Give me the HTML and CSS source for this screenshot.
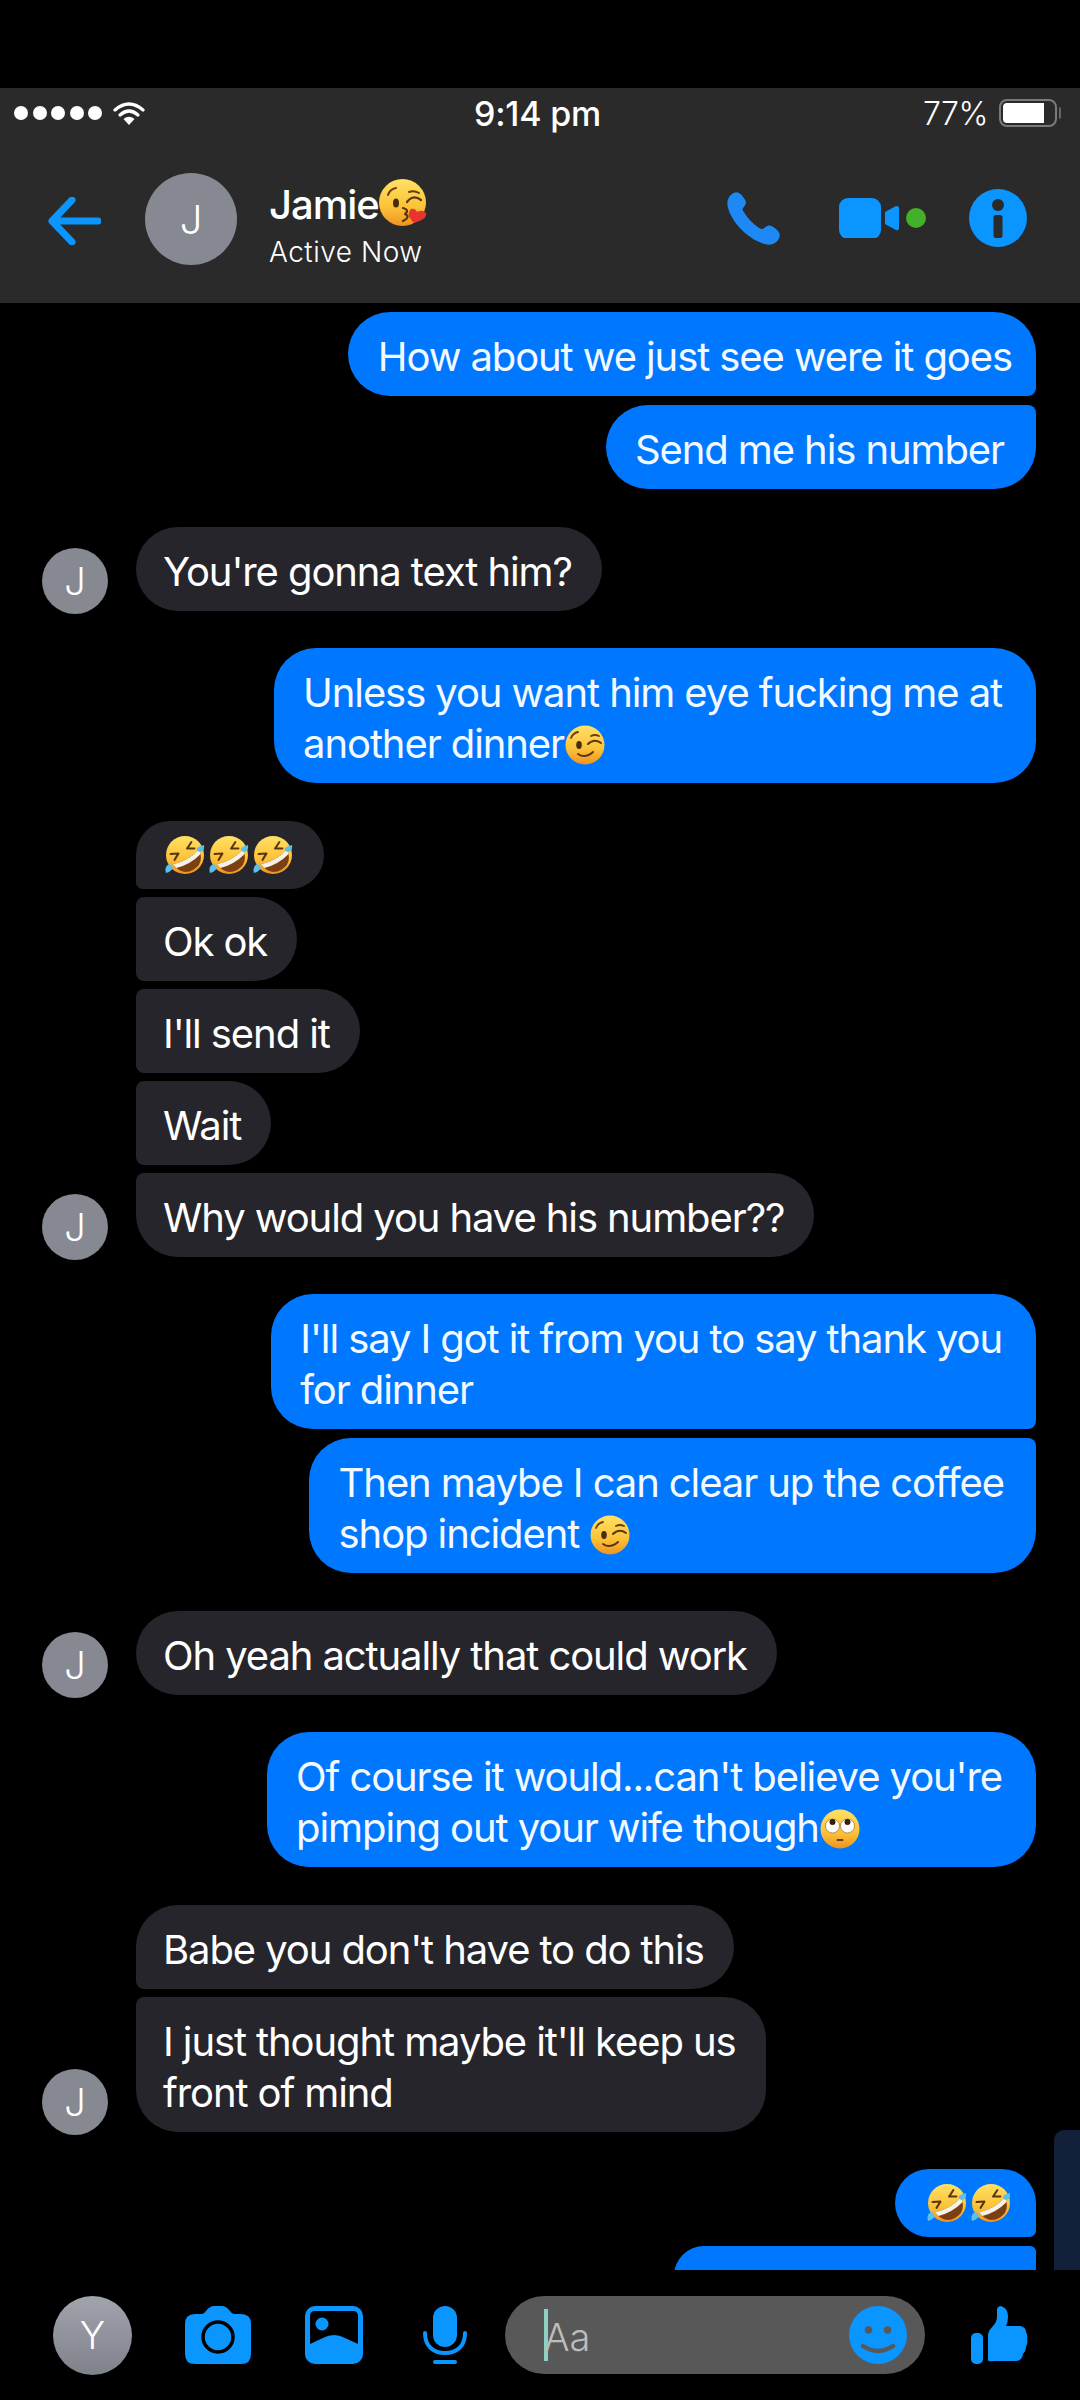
FILE: index.html
```html
<!DOCTYPE html>
<html lang="en">

<head>
    <meta charset="UTF-8">
    <title>Jamie</title>
    <link rel="stylesheet" href="styles.css">
</head>

<body>
    <svg class="sprites" xmlns="http://www.w3.org/2000/svg">
        <defs>
            <linearGradient id="skin" x1="0" y1="0" x2="0" y2="1">
                <stop offset="0" stop-color="#ffe164" />
                <stop offset="0.6" stop-color="#fcc238" />
                <stop offset="1" stop-color="#ee9322" />
            </linearGradient>
            <symbol id="e-rofl" viewBox="0 0 40 40">
                <circle cx="20" cy="20" r="19" fill="url(#skin)" />
                <g transform="rotate(-30 20 20)">
                    <path d="M8 12 L15 15.5 L8.5 19" fill="none" stroke="#5b3410" stroke-width="2" stroke-linecap="round" stroke-linejoin="round" />
                    <path d="M32 12 L25 15.5 L31.5 19" fill="none" stroke="#5b3410" stroke-width="2" stroke-linecap="round" stroke-linejoin="round" />
                    <path d="M5 22 Q20 27 35 22 Q33 37 20 37 Q7 37 5 22 Z" fill="#7c3f12" />
                    <path d="M5 22 Q20 27 35 22 L34 27 Q20 31 6 27 Z" fill="#f4f1ea" />
                </g>
                <path d="M39 10 Q40 16 35 17 Q31 16 32 13 Q35 11 39 10 Z" fill="#5cc0ea" />
                <path d="M1 38 Q-1 32 4 29 Q8 30 7.500 34 Q5 37 1 38 Z" fill="#5cc0ea" />
            </symbol>
            <symbol id="e-wink" viewBox="0 0 40 40">
                <circle cx="20" cy="20" r="19.500" fill="url(#skin)" />
                <path d="M6 13 Q8 8 13 7" fill="none" stroke="#6a3d12" stroke-width="1.800" stroke-linecap="round" />
                <ellipse cx="14" cy="20" rx="2.800" ry="4" fill="#4a2c10" />
                <path d="M23 19 Q29 13 36 18" fill="none" stroke="#5b3410" stroke-width="2" stroke-linecap="round" />
                <path d="M26 11 Q30 9 34 11" fill="none" stroke="#6a3d12" stroke-width="1.800" stroke-linecap="round" />
                <path d="M13 29 Q20 34 28 27" fill="none" stroke="#5b3410" stroke-width="2" stroke-linecap="round" />
            </symbol>
            <symbol id="e-roll" viewBox="0 0 40 40">
                <circle cx="20" cy="20" r="19.500" fill="url(#skin)" />
                <circle cx="12.500" cy="17" r="7" fill="#fff" stroke="#8a5a1c" stroke-width="0.600" />
                <circle cx="27.500" cy="17" r="7" fill="#fff" stroke="#8a5a1c" stroke-width="0.600" />
                <circle cx="12.500" cy="13" r="3" fill="#33210d" />
                <circle cx="27.500" cy="13" r="3" fill="#33210d" />
                <rect x="16.500" y="30" width="7" height="2" rx="1" fill="#6a3d12" />
            </symbol>
            <symbol id="e-kiss" viewBox="0 0 48 48">
                <circle cx="23.500" cy="23.500" r="23.500" fill="url(#skin)" />
                <path d="M9 16 Q11 10 17 9" fill="none" stroke="#6a3d12" stroke-width="2" stroke-linecap="round" />
                <ellipse cx="17" cy="24" rx="3" ry="4.500" fill="#4a2c10" />
                <path d="M28 23 Q34 15 42 21" fill="none" stroke="#5b3410" stroke-width="2.200" stroke-linecap="round" />
                <path d="M30 13 Q35 11 40 14" fill="none" stroke="#6a3d12" stroke-width="2" stroke-linecap="round" />
                <path d="M24 29 Q31 31 26 35 Q32 38 24 42" fill="none" stroke="#5b3410" stroke-width="2.200" stroke-linecap="round" stroke-linejoin="round" />
                <path d="M35 44 Q26 36 32 30 Q36 29 38 33 Q43 30 47 34 Q49 40 35 44 Z" fill="#e8342f" />
            </symbol>
        </defs>
    </svg>

    <div class="app">
        <header class="topbar">
            <div class="status">
                <div class="status-left">
                    <span class="dot"></span><span class="dot"></span><span class="dot"></span><span class="dot"></span><span class="dot"></span>
                    <svg class="wifi" viewBox="0 0 32 24">
                        <path d="M2 9 Q16 -3 30 9" fill="none" stroke="#fff" stroke-width="3.200" stroke-linecap="round" />
                        <path d="M7 14 Q16 6 25 14" fill="none" stroke="#fff" stroke-width="3.200" stroke-linecap="round" />
                        <path d="M10.500 18 Q16 13.500 21.500 18 L16 24 Z" fill="#fff" />
                    </svg>
                </div>
                <div class="status-time">9:14 pm</div>
                <div class="status-right">
                    <span class="percent">77%</span>
                    <span class="battery"><span class="battery-fill"></span></span>
                    <span class="battery-tip"></span>
                </div>
            </div>
            <div class="nav">
                <svg class="icon-back" viewBox="0 0 53 48">
                    <path d="M50 24 H4 M24 3 L4 24 L24 45" fill="none" stroke="#0a95ff" stroke-width="7" stroke-linecap="round" stroke-linejoin="round" />
                </svg>
                <div class="avatar avatar-nav">J</div>
                <div class="contact">
                    <div class="contact-name">Jamie<svg class="emoji-kiss"><use href="#e-kiss" /></svg></div>
                    <div class="contact-status">Active Now</div>
                </div>
                <div class="nav-actions">
                    <svg class="icon-phone" viewBox="0 0 160 160">
                        <path d="M20 3 C30 -2 40 3 48 14 C60 28 60 34 50 46 C46 50 46 54 52 62 C62 80 78 96 96 108 C106 114 110 112 116 106 C126 98 132 100 146 110 C160 120 162 130 156 142 C148 156 134 162 116 158 C70 146 14 96 2 44 C-1 26 4 12 20 3 Z" fill="#1e88f5" />
                    </svg>
                    <svg class="icon-video" viewBox="0 0 87 40">
                        <rect x="0" y="0" width="42" height="41" rx="9" fill="#0a95ff" />
                        <path d="M46 14 L57 8 Q60 8 60 10 V30 Q60 33 57 32 L46 26 Q46 20 46 14 Z" fill="#0a95ff" />
                        <circle cx="77" cy="20" r="10" fill="#43b02a" />
                    </svg>
                    <svg class="icon-info" viewBox="0 0 58 58">
                        <circle cx="29" cy="29" r="29" fill="#0a95ff" />
                        <circle cx="29" cy="16" r="6" fill="#2a2a2a" />
                        <rect x="24.500" y="26" width="9" height="23" rx="2.500" fill="#2a2a2a" />
                    </svg>
                </div>
            </div>
        </header>

        <main class="chat">
            <div class="group out">
                <div class="bubble first p-a">How about we just see were it goes</div>
                <div class="bubble last p-b">Send me his number</div>
            </div>

            <div class="group in">
                <div class="avatar">J</div>
                <div class="stack">
                    <div class="bubble single">You're gonna text him?</div>
                </div>
            </div>

            <div class="group out">
                <div class="bubble single p-c">Unless you want him eye fucking me at<br>another dinner<svg class="emoji"><use href="#e-wink" /></svg></div>
            </div>

            <div class="group in">
                <div class="avatar">J</div>
                <div class="stack">
                    <div class="bubble first emoji-row"><svg class="emoji"><use href="#e-rofl" /></svg><svg class="emoji"><use href="#e-rofl" /></svg><svg class="emoji"><use href="#e-rofl" /></svg></div>
                    <div class="bubble middle">Ok ok</div>
                    <div class="bubble middle">I'll send it</div>
                    <div class="bubble middle">Wait</div>
                    <div class="bubble last">Why would you have his number??</div>
                </div>
            </div>

            <div class="group out">
                <div class="bubble first p-c">I'll say I got it from you to say thank you<br>for dinner</div>
                <div class="bubble last p-d">Then maybe I can clear up the coffee<br>shop incident <svg class="emoji"><use href="#e-wink" /></svg></div>
            </div>

            <div class="group in">
                <div class="avatar">J</div>
                <div class="stack">
                    <div class="bubble single">Oh yeah actually that could work</div>
                </div>
            </div>

            <div class="group out">
                <div class="bubble single p-c">Of course it would...can't believe you're<br>pimping out your wife though<svg class="emoji"><use href="#e-roll" /></svg></div>
            </div>

            <div class="group in">
                <div class="avatar">J</div>
                <div class="stack">
                    <div class="bubble first">Babe you don't have to do this</div>
                    <div class="bubble last">I just thought maybe it'll keep us<br>front of mind</div>
                </div>
            </div>

            <div class="group out">
                <div class="bubble first emoji-row"><svg class="emoji"><use href="#e-rofl" /></svg><svg class="emoji"><use href="#e-rofl" /></svg></div>
                <div class="bubble last cut"></div>
            </div>

            <div class="scroll-thumb"></div>
        </main>

        <footer class="composer">
            <div class="avatar avatar-me">Y</div>
            <svg class="icon-camera" viewBox="0 0 66 58">
                <path d="M10 8 H17 Q19 8 21 5 Q25 0 29 0 H37 Q41 0 45 5 Q47 8 49 8 H56 Q66 8 66 18 V48 Q66 58 56 58 H10 Q0 58 0 48 V18 Q0 8 10 8 Z" fill="#0a95ff" />
                <circle cx="33" cy="31" r="15" fill="none" stroke="#000" stroke-width="3.500" />
            </svg>
            <svg class="icon-image" viewBox="0 0 58 58">
                <rect x="0" y="0" width="58" height="58" rx="10" fill="#0a95ff" />
                <path d="M5 38 V10 Q5 5 10 5 H48 Q53 5 53 10 V38 L40 32 Q29 26 18 32 Z" fill="#000" />
                <circle cx="17" cy="18" r="6.500" fill="#0a95ff" />
            </svg>
            <svg class="icon-mic" viewBox="0 0 44 58">
                <rect x="10" y="0" width="24" height="41" rx="12" fill="#0a95ff" />
                <path d="M2 27 C2 41 11 47 22 47 C33 47 42 41 42 27" fill="none" stroke="#0a95ff" stroke-width="4" stroke-linecap="round" />
                <rect x="10" y="54" width="24" height="4" rx="2" fill="#0a95ff" />
            </svg>
            <div class="input">
                <span class="caret"></span>
                <span class="placeholder">Aa</span>
                <svg class="icon-smile" viewBox="0 0 58 58">
                    <circle cx="29" cy="29" r="29" fill="#0a95ff" />
                    <circle cx="19.500" cy="24" r="3.800" fill="#585858" />
                    <circle cx="38.500" cy="24" r="3.800" fill="#585858" />
                    <path d="M14 40 Q29 50 44 40" fill="none" stroke="#585858" stroke-width="4.500" stroke-linecap="round" />
                </svg>
            </div>
            <svg class="icon-thumb" viewBox="0 0 58 58">
                <rect x="1" y="27" width="12" height="31" rx="5" fill="#0a95ff" />
                <path d="M18 54 V30 Q18 25 23 20 Q27 16 27 10 V3 Q28 0 31 0 Q38 2 38 11 Q38 16 36 20 H50 Q56 21 56 26 Q58 29 57 33 Q58 37 56 41 Q56 45 53 48 Q52 55 46 55 H24 Q18 56 18 54 Z" fill="#0a95ff" />
            </svg>
        </footer>
    </div>
</body>

</html>
```

FILE: styles.css
```css
body,
html {
    margin: 0;
    padding: 0;
    background: #000;
    color: #fff;
    font-family: 'Inter', 'Liberation Sans', sans-serif;
}

.sprites {
    display: block;
    width: 0;
    height: 0;
}

.app {
    width: 1080px;
    height: 2400px;
    padding-top: 88px;
    box-sizing: border-box;
    display: flex;
    flex-direction: column;
    overflow: hidden;
}

/* top bar */

.topbar {
    height: 215px;
    flex: none;
    background: #2a2a2a;
}

.status {
    height: 50px;
    padding: 0 19px 0 14px;
    display: flex;
    align-items: center;
    justify-content: space-between;
    position: relative;
}

.status-left {
    display: flex;
    align-items: center;
    gap: 4.500px;
    width: 300px;
}

.dot {
    width: 14px;
    height: 14px;
    border-radius: 50%;
    background: #fff;
}

.wifi {
    width: 32px;
    height: 24px;
    margin-left: 6px;
}

.status-time {
    font-size: 34px;
    font-weight: 500;
    letter-spacing: -0.2px;
}

.status-right {
    width: 300px;
    display: flex;
    align-items: center;
    justify-content: flex-end;
}

.percent {
    font-size: 32px;
    font-weight: 300;
    letter-spacing: -0.5px;
    margin-right: 11px;
}

.battery {
    width: 58px;
    height: 28px;
    box-sizing: border-box;
    border: 2px solid #7a7a7a;
    border-radius: 8px;
    padding: 2px;
    display: flex;
}

.battery-fill {
    width: 41px;
    background: #fff;
    border-radius: 4px 0 0 4px;
}

.battery-tip {
    width: 2px;
    height: 12px;
    margin-left: 2px;
    background: #666;
    border-radius: 0 2px 2px 0;
}

.nav {
    height: 165px;
    display: flex;
    align-items: center;
    padding: 0 53px 0 48px;
}

.icon-back {
    width: 53px;
    height: 48px;
    margin-right: 44px;
}

.avatar {
    width: 66px;
    height: 66px;
    flex: none;
    border-radius: 50%;
    background: #868992;
    display: flex;
    align-items: center;
    justify-content: center;
    font-size: 38px;
    font-weight: 300;
    color: #fff;
}

.avatar-nav {
    width: 92px;
    height: 92px;
    font-size: 40px;
    margin-top: -3px;
    margin-right: 32px;
}

.contact {
    flex: 1;
    margin-top: 7px;
}

.contact-name {
    font-size: 40px;
    font-weight: 500;
    letter-spacing: -1px;
    height: 54px;
    line-height: 54px;
    display: flex;
    align-items: center;
}

.emoji-kiss {
    width: 48px;
    height: 48px;
    margin-top: -4px;
}

.contact-status {
    font-size: 28px;
    font-weight: 300;
    letter-spacing: 0.5px;
    height: 38px;
    line-height: 40px;
}

.nav-actions {
    display: flex;
    align-items: center;
    margin-top: -5px;
}

.icon-phone {
    width: 53px;
    height: 53px;
    margin-right: 59px;
}

.icon-video {
    width: 87px;
    height: 40px;
    margin-right: 43px;
}

.icon-info {
    width: 58px;
    height: 58px;
}

/* messages */

.chat {
    flex: 1;
    position: relative;
    overflow: hidden;
    padding-top: 9px;
    display: flex;
    flex-direction: column;
    gap: 37.500px;
}

.group {
    display: flex;
    flex: none;
}

.group.out {
    flex-direction: column;
    align-items: flex-end;
    gap: 9px;
    padding-right: 44px;
}

.group.in {
    align-items: flex-end;
    padding-left: 42px;
    gap: 28px;
}

.group.in .avatar {
    margin-bottom: -3px;
}

.stack {
    display: flex;
    flex-direction: column;
    align-items: flex-start;
    gap: 8px;
}

.bubble {
    font-size: 40px;
    line-height: 51px;
    letter-spacing: -1.1px;
    white-space: nowrap;
    padding: 19px 30px 14px 27px;
    border-radius: 42px;
}

.out .bubble {
    background: #0077ff;
    color: #f2faff;
    padding-left: 30px;
    padding-right: 24px;
}

.in .bubble {
    background: #26252b;
    color: #fff;
}

.out .first {
    border-bottom-right-radius: 8px;
}

.out .last {
    border-top-right-radius: 8px;
}

.in .first {
    border-bottom-left-radius: 8px;
}

.in .middle {
    border-top-left-radius: 8px;
    border-bottom-left-radius: 8px;
}

.in .last {
    border-top-left-radius: 8px;
}

.emoji {
    width: 40px;
    height: 40px;
    vertical-align: -7px;
    margin-left: 1px;
}

.bubble.emoji-row {
    display: flex;
    gap: 3px;
    padding: 14px 31px 14px 28px;
}

.out .bubble.emoji-row {
    padding: 14px 25px 14px 31px;
}

.out .bubble.p-b {
    padding-left: 29px;
    padding-right: 32px;
}

.out .bubble.p-c {
    padding-left: 29px;
    padding-right: 34px;
}

.out .bubble.p-d {
    padding-left: 30px;
    padding-right: 32px;
}

.out .bubble.cut {
    width: 362px;
    height: 60px;
    box-sizing: border-box;
    flex: none;
}

.scroll-thumb {
    position: absolute;
    right: 0;
    top: 1827px;
    width: 26px;
    height: 160px;
    background: #12203a;
    border-radius: 10px 0 0 10px;
}

/* bottom bar */

.composer {
    height: 130px;
    flex: none;
    display: flex;
    align-items: center;
    padding-left: 53px;
    background: #000;
}

.avatar-me {
    width: 79px;
    height: 79px;
    font-size: 38px;
    background: linear-gradient(#a1a4ac, #7f828a);
    margin-right: 53px;
}

.icon-camera {
    width: 66px;
    height: 58px;
    margin-right: 54px;
}

.icon-image {
    width: 58px;
    height: 58px;
    margin-right: 60px;
}

.icon-mic {
    width: 44px;
    height: 58px;
    margin-right: 38px;
}

.input {
    width: 420px;
    height: 78px;
    box-sizing: border-box;
    border-radius: 39px;
    background: #585858;
    display: flex;
    align-items: center;
    padding: 0 18px 0 39px;
    position: relative;
}

.caret {
    width: 4px;
    height: 52px;
    background: #8fd0c5;
    flex: none;
}

.placeholder {
    flex: 1;
    font-size: 38px;
    font-weight: 300;
    color: #bdbdbd;
    margin-left: -4px;
    padding-top: 4px;
}

.icon-smile {
    width: 58px;
    height: 58px;
}

.icon-thumb {
    width: 58px;
    height: 58px;
    margin-left: 45px;
}
```
